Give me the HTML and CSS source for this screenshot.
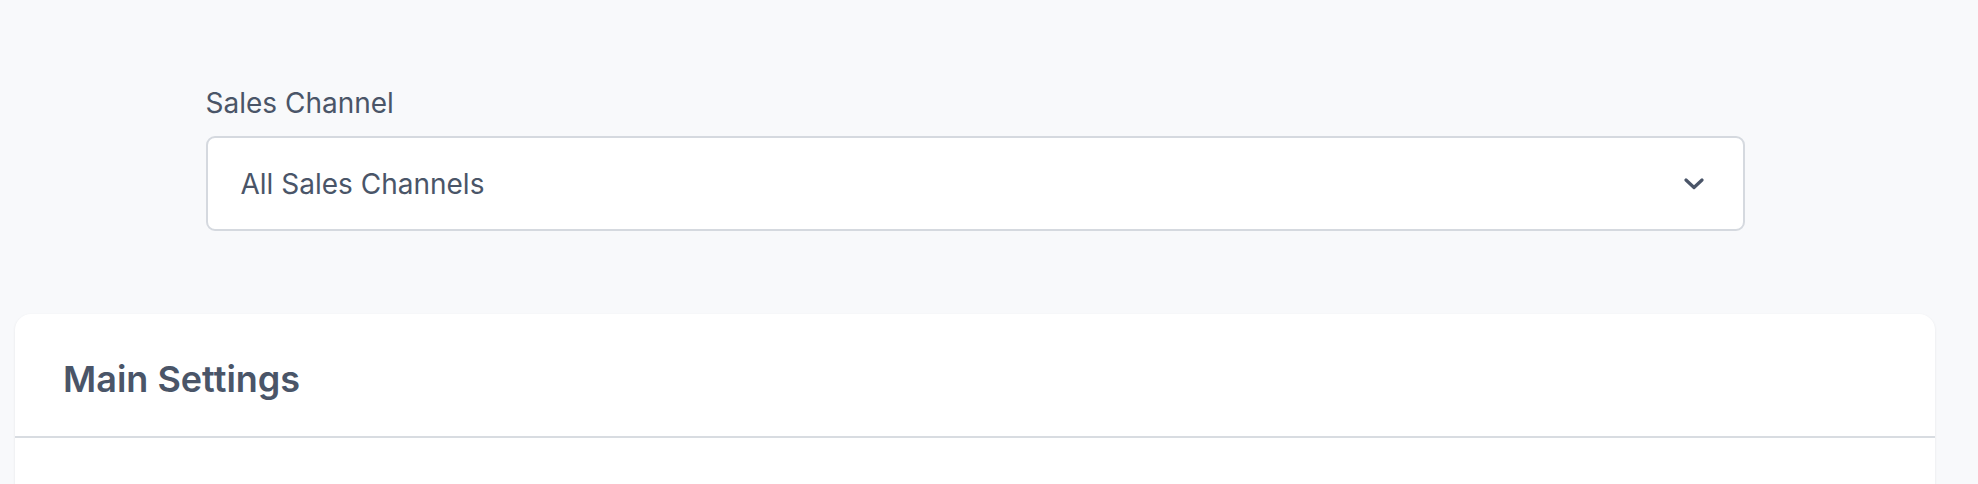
FILE: index.html
```html
<!DOCTYPE html>
<html>
<head>
<meta charset="utf-8">
<link rel="stylesheet" href="styles.css">
</head>
<body>
<div class="container">
  <div class="channel">
    <label class="channel-label">Sales Channel</label>
    <div class="select">
      <span class="select-value">All Sales Channels</span>
      <svg class="chevron" width="20" height="12" viewBox="0 0 20 12"><path d="M2 2 L10 9.5 L18 2" fill="none" stroke="#4a5568" stroke-width="3.2" stroke-linecap="round" stroke-linejoin="round"/></svg>
    </div>
  </div>
  <div class="card">
    <div class="card-header">
      <h2 class="card-title">Main Settings</h2>
    </div>
    <div class="card-body"></div>
  </div>
</div>
</body>
</html>
```
FILE: styles.css
```css
html, body {
  margin: 0;
  padding: 0;
  background: #f8f9fb;
  font-family: Inter, "Noto Sans", sans-serif;
  color: #4a5568;
}
.container {
  width: 1920px;
  margin-left: 15px;
}
.channel {
  width: 1539px;
  margin: 0 auto;
  padding-top: 83px;
}
.channel-label {
  display: block;
  font-size: 28px;
  line-height: 40px;
  color: #4a5568;
  margin-bottom: 13px;
}
.select {
  box-sizing: border-box;
  height: 95px;
  background: #fff;
  border: 2px solid #d5d9df;
  border-radius: 9px;
  display: flex;
  align-items: center;
  justify-content: space-between;
  padding: 0 39px 0 33px;
}
.select-value {
  font-size: 28px;
  line-height: 40px;
  color: #4a5568;
}
.chevron {
  display: block;
}
.card {
  margin-top: 83px;
  background: #fff;
  border-radius: 16px;
  box-shadow: 0 1px 3px rgba(0,0,0,0.08);
  height: 200px;
}
.card-header {
  padding: 37px 48px 29px;
  border-bottom: 2px solid #d8dce1;
}
.card-title {
  margin: 0;
  font-size: 36px;
  line-height: 56px;
  font-weight: 600;
  color: #4a5568;
}
```
